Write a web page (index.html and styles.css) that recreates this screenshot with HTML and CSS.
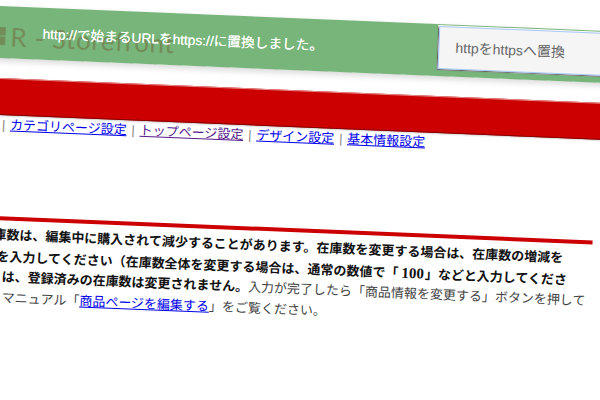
FILE: index.html
```html
<!DOCTYPE html>
<html lang="ja">
	<head>
		<title>商品ページ編集</title>
		<meta charset="UTF-8">
		<link rel="stylesheet" href="styles.css">
	</head>
	<body>
		<div id="page">
			<div id="header">
				<div class="logo"><span class="logoMark"></span><span class="logoText">R - Storefront</span></div>
				<div id="notice">
					<div class="message">http://で始まるURLをhttps://に置換しました。</div>
					<div class="replace">httpをhttpsへ置換</div>
				</div>
			</div>
			<div id="redbar"></div>
			<div id="nav">
				<span class="sep">|</span>
				<a href="#">カテゴリページ設定</a>
				<span class="sep">|</span>
				<a href="#" class="visited">トップページ設定</a>
				<span class="sep">|</span>
				<a href="#">デザイン設定</a>
				<span class="sep">|</span>
				<a href="#">基本情報設定</a>
			</div>
			<div id="guide">
				<b>商品在庫数は、編集中に購入されて減少することがあります。在庫数を変更する場合は、在庫数の増減を</b><br>
				<b class="second">の数値を入力してください（在庫数全体を変更する場合は、通常の数値で「<span class="num">100</span>」などと入力してくださ</b><br>
				<b class="third">い）。　は、登録済みの在庫数は変更されません。</b>入力が完了したら「商品情報を変更する」ボタンを押して<br>
				<span class="last">詳細は、マニュアル「<a href="#">商品ページを編集する</a>」をご覧ください。</span>
			</div>
		</div>
	</body>
</html>
```

FILE: styles.css
```css
html, body {
	margin: 0;
	height: 100%;
	overflow: hidden;
	background: #fff;
}
body {
	font-family: "Liberation Sans", "Noto Sans CJK JP", sans-serif;
	font-size: 13px;
	color: #333;
	text-spacing-trim: space-all;
}
#page {
	width: 760px;
	margin-left: -60px;
	transform: rotate(2.35deg);
	transform-origin: 60px 0;
}
#header {
	position: relative;
	height: 78px;
}
.logo {
	display: flex;
	align-items: center;
	gap: 5px;
	height: 78px;
	padding: 0 0 7px 43px;
	box-sizing: border-box;
}
.logoMark {
	width: 24px;
	height: 18px;
	background: linear-gradient(#f0325a 45%, #f5a0b0 45%, #f5a0b0 55%, #f0325a 55%);
}
.logoText {
	font-family: Lato, sans-serif;
	font-weight: 400;
	font-size: 26px;
	letter-spacing: 0.6px;
	color: #f0325a;
}
#notice {
	position: absolute;
	top: 6px;
	left: 0;
	right: 0;
	height: 52px;
	display: flex;
	background: rgba(85, 162, 89, 0.8);
	box-shadow: 0 3px 6px rgba(0, 0, 0, 0.15);
}
.message {
	width: 500px;
	padding: 18px 0 0 104px;
	box-sizing: border-box;
	color: #fff;
	font-size: 13.7px;
	line-height: 18px;
	text-shadow: 0 0 0.5px #fff;
}
.replace {
	width: 200px;
	height: 43px;
	line-height: 41px;
	margin-top: 2px;
	padding-left: 16px;
	box-sizing: border-box;
	background: #f5f5f5;
	border: 1px solid #a9c8fb;
	box-shadow: -1px 1px 1px #555, 0 0 0 1px #fff;
	color: #666;
	font-size: 14px;
}
#redbar {
	height: 37px;
	background: #c00;
	border-top: 1px solid #e58a8a;
	border-bottom: 1px solid #800;
	box-sizing: border-box;
	box-shadow: 0 1px 2px rgba(0, 0, 0, 0.2);
}
#nav {
	display: flex;
	gap: 4.8px;
	height: 101px;
	padding: 0 0 0 67px;
	box-sizing: border-box;
	line-height: 20px;
}
#nav .sep {
	color: #888;
}
a {
	color: #00e;
}
a.visited {
	color: #551a8b;
}
#guide {
	width: 662px;
	padding: 5px 0 0 24px;
	border-top: 4px solid #c00;
	line-height: 20.5px;
	white-space: nowrap;
	color: #444;
	box-sizing: border-box;
}
#guide b {
	color: #111;
}
#guide .second {
	margin-left: 4px;
}
#guide .third {
	margin-left: -3px;
}
.last {
	margin-left: -2px;
}
.num {
	font-family: "Liberation Serif", serif;
	font-size: 15px;
	margin: 0 1px 0 3px;
}
```
